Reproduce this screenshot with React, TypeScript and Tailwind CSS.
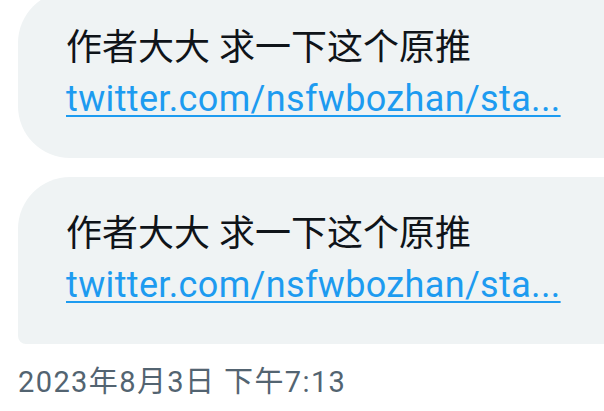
import React from 'react';

const font = { fontFamily: 'Roboto, "Noto Sans CJK SC", sans-serif' };

const Bubble: React.FC<{ tail?: boolean; className?: string }> = ({ tail, className }) => (
  <div
    className={`bg-[#eff3f4] w-[600px] pl-[48px] pt-[32px] pb-[33px] ${
      tail ? 'rounded-l-[52px]' : 'rounded-tl-[52px] rounded-bl-[8px]'
    } ${className ?? ''}`}
  >
    <div className="h-[50px] leading-[50px] text-[36px] text-[#0f1419] whitespace-nowrap">
      作者大大 求一下这个原推
    </div>
    <div className="h-[52px] leading-[52px] text-[36px] tracking-[0.35px] whitespace-nowrap">
      <a className="text-[#1d9bf0] underline decoration-[2px] underline-offset-[4px]">
        twitter.com/nsfwbozhan/sta...
      </a>
    </div>
  </div>
);

export default function App() {
  return (
    <div className="w-[604px] h-[411px] overflow-hidden bg-white" style={font}>
      <div className="pl-[18px]">
        <Bubble tail className="-mt-[9px]" />
        <Bubble className="mt-[19px]" />
        <div className="mt-[18px] text-[29px] leading-[40px] tracking-[1.4px] text-[#536471] whitespace-nowrap">
          2023年8月3日 下午7:13
        </div>
      </div>
    </div>
  );
}
